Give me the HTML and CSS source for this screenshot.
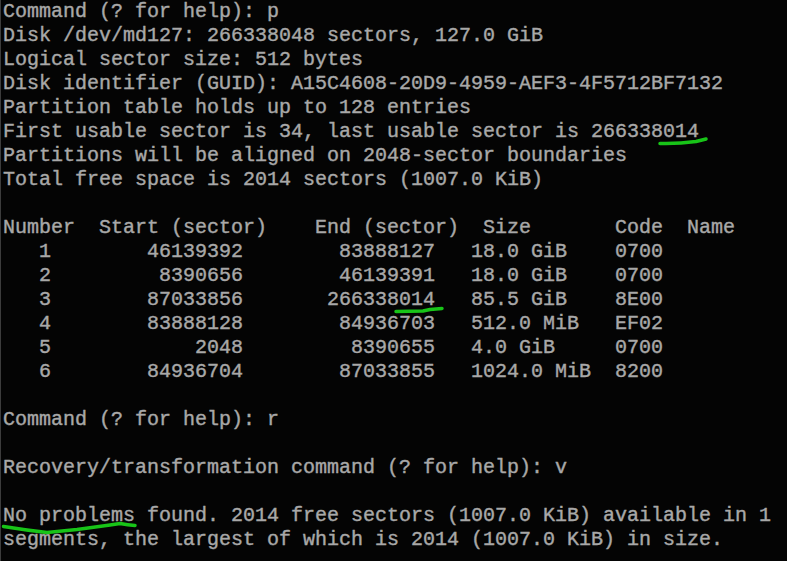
FILE: index.html
```html
<!DOCTYPE html>
<html>
<head>
<meta charset="utf-8">
<link rel="stylesheet" href="styles.css">
</head>
<body>
<div class="screen">
<pre class="term">Command (? for help): p
Disk /dev/md127: 266338048 sectors, 127.0 GiB
Logical sector size: 512 bytes
Disk identifier (GUID): A15C4608-20D9-4959-AEF3-4F5712BF7132
Partition table holds up to 128 entries
First usable sector is 34, last usable sector is 266338014
Partitions will be aligned on 2048-sector boundaries
Total free space is 2014 sectors (1007.0 KiB)

Number  Start (sector)    End (sector)  Size       Code  Name
   1        46139392        83888127   18.0 GiB    0700
   2         8390656        46139391   18.0 GiB    0700
   3        87033856       266338014   85.5 GiB    8E00
   4        83888128        84936703   512.0 MiB   EF02
   5            2048         8390655   4.0 GiB     0700
   6        84936704        87033855   1024.0 MiB  8200

Command (? for help): r

Recovery/transformation command (? for help): v

No problems found. 2014 free sectors (1007.0 KiB) available in 1
segments, the largest of which is 2014 (1007.0 KiB) in size.</pre>
<svg class="marks" width="787" height="561" viewBox="0 0 787 561" xmlns="http://www.w3.org/2000/svg">
<path d="M660 143.5 Q678 144 696 141.5 L706 139" />
<path d="M396 311.5 L423 311 L430 309.5 L442 308.5" />
<path d="M3.5 526.5 Q25 530 47 532.5 Q62 531 77 529.5 Q95 527 110 525 L120 523.5 Q128 525 135 525.5" />
</svg>
</div>
</body>
</html>
```
FILE: styles.css
```css
html, body {
  margin: 0;
  padding: 0;
  background: #040404;
}
.screen {
  position: relative;
  width: 786px;
  height: 561px;
  border-left: 1px solid #3c3c3c;
  overflow: hidden;
  background: #040404;
}
.term {
  margin: 0;
  padding: 0 0 0 2px;
  font-family: "Liberation Mono", monospace;
  font-size: 20px;
  line-height: 24px;
  color: #a8a8a8;
  white-space: pre;
  -webkit-text-stroke: 0.4px #a8a8a8;
}
.marks {
  position: absolute;
  left: -1px;
  top: 0;
  pointer-events: none;
}
.marks path {
  fill: none;
  stroke: #18c418;
  stroke-width: 3.5;
  stroke-linecap: round;
  stroke-linejoin: round;
}
```
